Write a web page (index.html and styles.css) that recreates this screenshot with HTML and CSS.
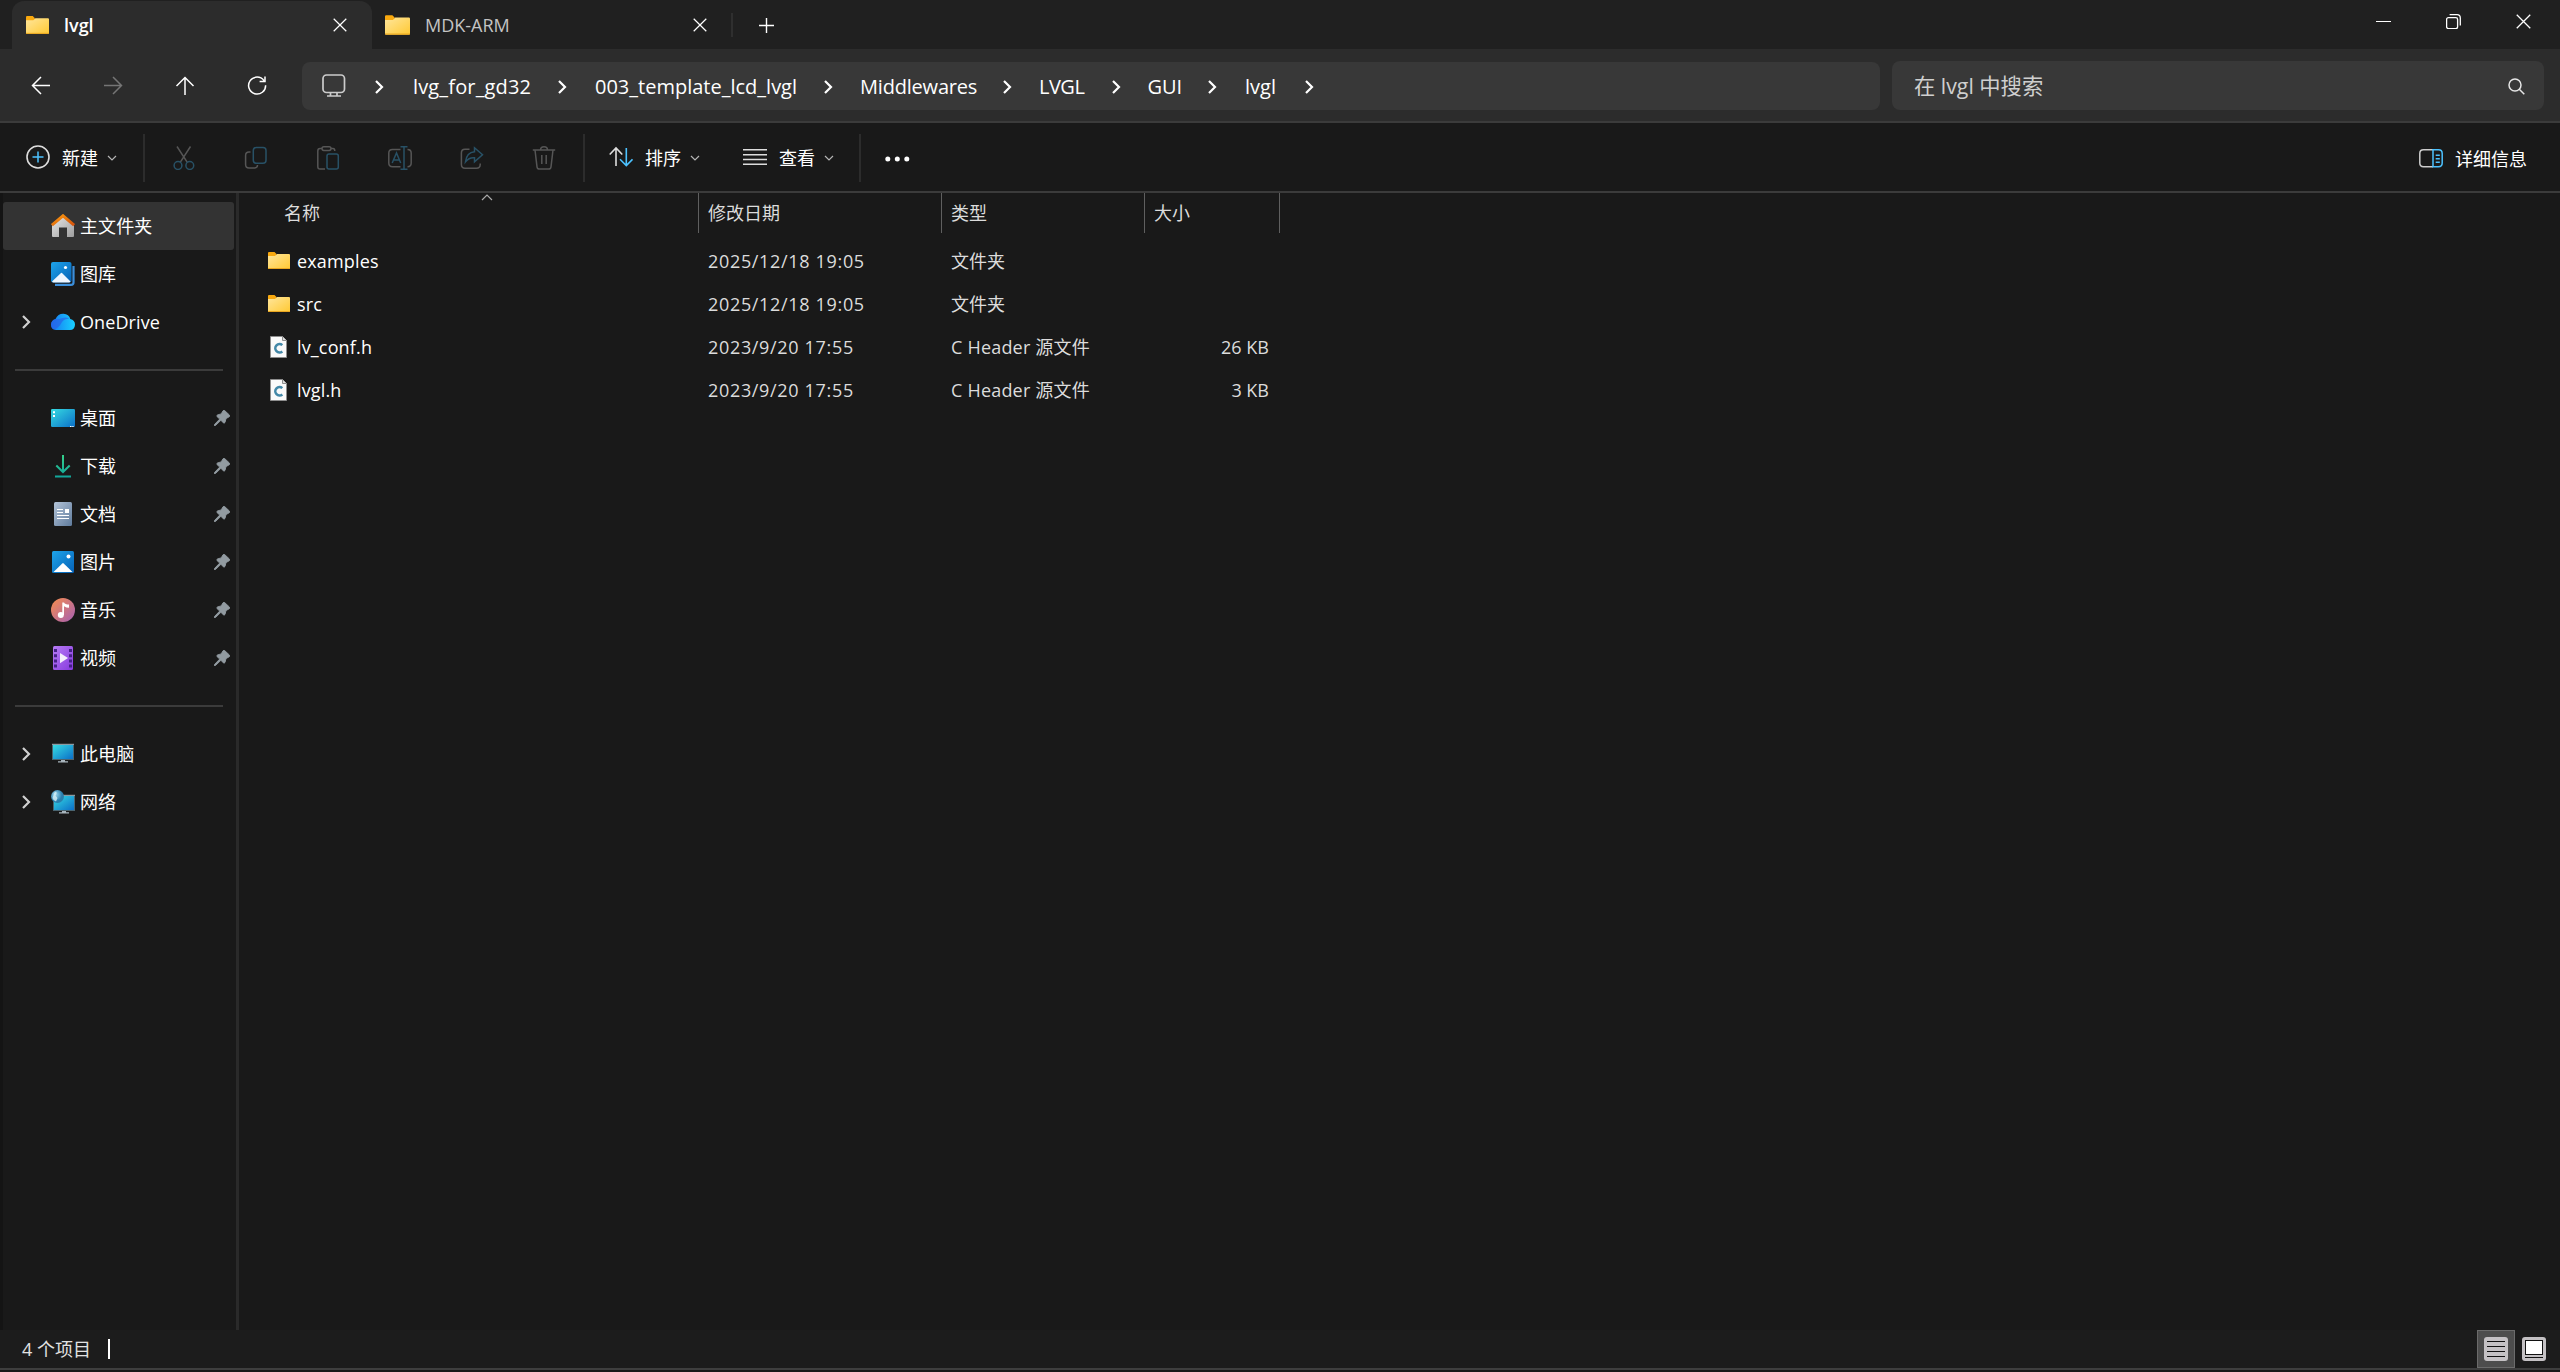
FILE: index.html
```
<!DOCTYPE html>
<html lang="zh-CN">
<head>
	<meta charset="utf-8">
	<title>lvgl</title>
	<link rel="stylesheet" href="styles.css">
</head>
<body>
	<svg class="defs">
		<defs>
			<linearGradient id="gFolder" x1="0" y1="0" x2="1" y2="1"><stop offset="0" stop-color="#ffe69c"/><stop offset="1" stop-color="#ffc933"/></linearGradient>
			<linearGradient id="gScreen" x1="0" y1="0" x2="1" y2="1"><stop offset="0" stop-color="#36dbe2"/><stop offset="1" stop-color="#0b6fc8"/></linearGradient>
			<linearGradient id="gBlue" x1="0" y1="0" x2="1" y2="1"><stop offset="0" stop-color="#1ea4ea"/><stop offset="1" stop-color="#0561b6"/></linearGradient>
			<linearGradient id="gRoof" x1="0" y1="0" x2="1" y2="1"><stop offset="0" stop-color="#fb9a10"/><stop offset="1" stop-color="#d4500a"/></linearGradient>
			<linearGradient id="gWall" x1="0" y1="0" x2="1" y2="1"><stop offset="0" stop-color="#e8e8e8"/><stop offset="1" stop-color="#9e9e9e"/></linearGradient>
			<linearGradient id="gCloud" x1="0" y1="0" x2="1" y2="0"><stop offset="0" stop-color="#1677f0"/><stop offset="1" stop-color="#19d0ff"/></linearGradient>
			<linearGradient id="gDown" x1="0" y1="0" x2="0" y2="1"><stop offset="0" stop-color="#35d08a"/><stop offset="1" stop-color="#12a79b"/></linearGradient>
			<linearGradient id="gDoc" x1="0" y1="0" x2="1" y2="1"><stop offset="0" stop-color="#b3c4d8"/><stop offset="1" stop-color="#5f7b9c"/></linearGradient>
			<linearGradient id="gMusic" x1="0" y1="0" x2="1" y2="1"><stop offset="0" stop-color="#f78d4c"/><stop offset="1" stop-color="#a55fb5"/></linearGradient>
			<linearGradient id="gVideo" x1="0" y1="0" x2="1" y2="1"><stop offset="0" stop-color="#b77cf6"/><stop offset="1" stop-color="#8639dd"/></linearGradient>
			<radialGradient id="gGlobe" cx=".35" cy=".35"><stop offset="0" stop-color="#9fd8f0"/><stop offset="1" stop-color="#2a7fae"/></radialGradient>
		</defs>
		<symbol id="folder" viewBox="0 0 22 17">
			<path d="M0 1Q0 0 1 0H6.5L8.5 2V6H0z" fill="#f9a90f"/>
			<path d="M0 4H7L9 2H21Q22 2 22 3V16Q22 17 21 17H1Q0 17 0 16z" fill="url(#gFolder)"/>
			<path d="M0 16.5H22" stroke="#e9a620"/>
		</symbol>
		<symbol id="cfile" viewBox="0 0 17 22">
			<path d="M.5 .5H12.5L16.5 4.5V21.5H.5z" fill="#fafafa" stroke="#8d8d8d"/>
			<path d="M12.5 .5V4.5H16.5" fill="#ddd" stroke="#8d8d8d"/>
			<path d="M12.3 9.1A4.2 4.2 0 1 0 12.3 15.4" fill="none" stroke="#4388a8" stroke-width="2.6"/>
		</symbol>
		<symbol id="pin" viewBox="0 0 16 16">
			<path d="M9 .8Q9.9 -.2 10.8 .7L15.4 5Q16.2 5.9 15.3 6.7L12 8.6L11 12.4Q10.3 13.6 9.3 12.7L6.9 10.3L1.4 15.6L.2 15.8L.4 14.6L5.7 9.1L3 6.5Q2.4 5.4 3.6 4.9L7.2 3.9z" fill="#929ba1" stroke="#929ba1" stroke-width=".9"/>
		</symbol>
		<symbol id="right" viewBox="0 0 10 16"><path d="M2 2L8 8L2 14" fill="none" stroke="currentColor" stroke-width="2.2"/></symbol>
		<symbol id="down" viewBox="0 0 10 6"><path d="M1 1L5 5L9 1" fill="none" stroke="#b5b5b5" stroke-width="1.2"/></symbol>
		<symbol id="close" viewBox="0 0 16 16"><path d="M.8 .8L15.2 15.2M15.2 .8L.8 15.2" stroke="#fff" stroke-width="1.4"/></symbol>
	</svg>

	<header class="tabs">
		<div class="tab active">
			<svg class="tab-folder"><use href="#folder"/></svg>
			<span>lvgl</span>
			<svg class="tab-close"><use href="#close"/></svg>
		</div>
		<div class="tab">
			<svg class="tab-folder big"><use href="#folder"/></svg>
			<span>MDK-ARM</span>
			<svg class="tab-close"><use href="#close"/></svg>
		</div>
		<div class="tab-sep"></div>
		<svg class="tab-new" viewBox="0 0 15 15"><path d="M7.5 0V15M0 7.5H15" stroke="#fff" stroke-width="1.4"/></svg>
		<div class="window-buttons">
			<svg viewBox="0 0 15 15"><path d="M0 7.5H15" stroke="#fff"/></svg>
			<svg viewBox="0 0 15 15" fill="none" stroke="#fff" stroke-width="1.3"><rect x=".6" y="3.6" width="11" height="11" rx="1.8"/><path d="M3.6 .7H11Q14.3 .7 14.3 4V11.4"/></svg>
			<svg><use href="#close"/></svg>
		</div>
	</header>

	<nav class="navbar">
		<div class="nav-buttons">
			<svg viewBox="0 0 20 20"><path d="M19 9.5H1.5M10 1L1.5 9.5L10 18"/></svg>
			<svg class="off" viewBox="0 0 20 20"><path d="M1 9.5H18.5M10 1L18.5 9.5L10 18"/></svg>
			<svg viewBox="0 0 20 20"><path d="M10 19V1.5M1.5 10L10 1.5L18.5 10"/></svg>
			<svg viewBox="0 0 20 20"><path d="M17 4.6A8.5 8.5 0 1 0 18.6 9.2M18 .5V5.5H12.6"/></svg>
		</div>
		<div class="address">
			<svg class="monitor" viewBox="0 0 24 24" fill="none" stroke="#ccc" stroke-width="1.7"><rect x="1" y="1" width="21.5" height="17.5" rx="3.5"/><path d="M8.5 18.5V22M15 18.5V22M5 22H19"/></svg>
			<svg class="chev"><use href="#right"/></svg>
			<span class="c1">lvg_for_gd32</span>
			<svg class="chev"><use href="#right"/></svg>
			<span class="c2">003_template_lcd_lvgl</span>
			<svg class="chev"><use href="#right"/></svg>
			<span class="c3">Middlewares</span>
			<svg class="chev"><use href="#right"/></svg>
			<span class="c4">LVGL</span>
			<svg class="chev"><use href="#right"/></svg>
			<span class="c5">GUI</span>
			<svg class="chev"><use href="#right"/></svg>
			<span class="c6">lvgl</span>
			<svg class="chev"><use href="#right"/></svg>
		</div>
		<div class="search">
			<span>在 lvgl 中搜索</span>
			<svg viewBox="0 0 17 17" fill="none" stroke="#e6e6e6" stroke-width="1.5"><circle cx="7" cy="7" r="6"/><path d="M11.3 11.3L16.3 16.3"/></svg>
		</div>
	</nav>

	<div class="toolbar">
		<div class="tool new">
			<svg class="ic" viewBox="0 0 24 24" fill="none"><circle cx="12" cy="12" r="11" stroke="#ddd" stroke-width="1.6"/><path d="M12 6.5V17.5M6.5 12H17.5" stroke="#4cc2ff" stroke-width="1.5"/></svg>
			<span>新建</span>
			<svg class="drop"><use href="#down"/></svg>
		</div>
		<div class="bar-sep"></div>
		<div class="icons">
			<svg viewBox="0 0 24 24"><path d="M5 .5L15.3 16.3M18.5 .5L8.2 16.3"/><g class="b"><circle cx="6" cy="19.5" r="3.9"/><circle cx="17.8" cy="19.5" r="3.9"/></g></svg>
			<svg viewBox="0 0 24 24"><path d="M6.5 6H5Q1.6 6 1.6 9.5V18.5Q1.6 22 5 22H10Q13.5 22 13.5 19"/><rect class="b" x="9.3" y="1.5" width="12.7" height="15.8" rx="3"/></svg>
			<svg viewBox="0 0 24 24"><path d="M9 23H4Q1.8 23 1.8 20.5V5Q1.8 2.6 4 2.6H6M15 2.6H17Q18.8 2.6 18.8 5"/><rect x="6" y=".8" width="9" height="3.6" rx="1.8"/><rect class="b" x="11" y="8" width="11.3" height="15" rx="2"/></svg>
			<svg viewBox="0 0 24 24"><path d="M12.5 3.5H4.5Q.8 3.5 .8 7V17Q.8 20.7 4.5 20.7H12.5M19.5 3.5Q23.2 3.5 23.2 7V17Q23.2 20.7 19.5 20.7"/><path class="b" d="M12.5 .8H19.5M16 .8V23.2M12.5 23.2H19.5M4.2 17L8.5 7L12.7 17M5.6 14H11.3"/></svg>
			<svg viewBox="0 0 24 24"><path d="M9.5 3.3H5Q1.4 3.3 1.4 7V18.5Q1.4 22.2 5 22.2H16.5Q20.2 22.2 20.2 18.5V17.5"/><path class="b" d="M14.5 1.8L22.5 8.7L14.5 15.8V11.7Q9 11.2 5.5 15.8Q6.7 6.4 14.5 5.8z"/></svg>
			<svg viewBox="0 0 24 24"><path d="M.8 4H23.2M3 4L5 20.8Q5.3 23 7.5 23H16.5Q18.7 23 19 20.8L21 4M8.5 4Q8.5 .8 12 .8Q15.5 .8 15.5 4M9.8 9V18M14.2 9V18"/></svg>
		</div>
		<div class="bar-sep"></div>
		<div class="tool sort">
			<svg class="ic" viewBox="0 0 24 24" fill="none" stroke-width="1.6"><path d="M7 21V3M.7 9.5L7 3L13.3 9.5" stroke="#ddd"/><path d="M17.3 3V20.5M11 14.3L17.3 20.5L23.5 14.3" stroke="#4cc2ff"/></svg>
			<span>排序</span>
			<svg class="drop"><use href="#down"/></svg>
		</div>
		<div class="tool view">
			<svg class="ic" viewBox="0 0 24 24"><path d="M0 4.8H24M0 9.8H24M0 14.5H24M0 19.3H24" stroke="#ddd" stroke-width="1.6"/></svg>
			<span>查看</span>
			<svg class="drop"><use href="#down"/></svg>
		</div>
		<div class="bar-sep"></div>
		<svg class="more" viewBox="0 0 25 6" fill="#fff"><circle cx="2.8" cy="3" r="2.5"/><circle cx="12.3" cy="3" r="2.5"/><circle cx="21.8" cy="3" r="2.5"/></svg>
		<div class="tool details">
			<svg class="ic" viewBox="0 0 24 24" fill="none" stroke-width="1.5"><path d="M14 3.8H4.5Q.8 3.8 .8 7.5V17Q.8 20.7 4.5 20.7H14" stroke="#ccc"/><path d="M14 3.8H19.5Q23.2 3.8 23.2 7.5V17Q23.2 20.7 19.5 20.7H14zM16.7 9.3H20.8M16.7 12.8H20.8M16.7 16.2H20.8" stroke="#4cc2ff"/></svg>
			<span>详细信息</span>
		</div>
	</div>

	<main>
		<aside>
			<div class="item selected">
				<svg viewBox="0 0 24 24"><path d="M1 11L12 2L23 11V22Q23 23 22 23H16V13.5H8V23H2Q1 23 1 22z" fill="url(#gWall)"/><path d="M.9 11.2L12 1.8L23.1 11.2" fill="none" stroke="url(#gRoof)" stroke-width="3"/></svg>
				<span>主文件夹</span>
			</div>
			<div class="item">
				<svg viewBox="0 0 24 24"><path d="M22.5 4V20.5Q22.5 22.8 20 22.8H4" fill="none" stroke="#3b8fdc" stroke-width="2.2"/><rect width="20.5" height="20.5" rx="2" fill="url(#gBlue)"/><path d="M1 19.5L10 11Q10.5 10.6 11 11L19.5 19.5Q19 20.5 18 20.5H2.5Q1.5 20.5 1 19.5z" fill="#eef6ff"/><circle cx="14.5" cy="5.5" r="1.6" fill="#fff"/></svg>
				<span>图库</span>
			</div>
			<div class="item">
				<svg class="exp"><use href="#right"/></svg>
				<svg viewBox="0 0 24 24"><path d="M5 20Q0 19.5 0 14.5Q.3 10 4.5 9Q7 3.5 12.5 3.7Q18 4 19.3 9Q24 10 24 14.7Q23.6 20 19 20z" fill="url(#gCloud)"/><path d="M4.7 9Q.3 10 0 14.5Q0 18 3 19.5Q8 18 11 12Q13.5 8.5 18.5 8.7Q15 6.7 11.5 8Q8 9.6 4.7 9z" fill="#2a5fe8" opacity=".65"/></svg>
				<span>OneDrive</span>
			</div>
			<div class="line"></div>
			<div class="item">
				<svg viewBox="0 0 24 24"><rect y="3" width="24" height="18" rx="1.2" fill="url(#gScreen)"/><path d="M2 5.2H4V7.2H2zM2 9H4V11H2zM19 20H20.5V21H19zM21.3 20H22.6V21H21.3z" fill="#fff"/></svg>
				<span>桌面</span>
				<svg class="pin"><use href="#pin"/></svg>
			</div>
			<div class="item">
				<svg viewBox="0 0 24 24" fill="none" stroke="url(#gDown)" stroke-width="2"><path d="M12 1V18M5.3 11.5L12 18L18.7 11.5M4 22.5L20 22.4"/></svg>
				<span>下载</span>
				<svg class="pin"><use href="#pin"/></svg>
			</div>
			<div class="item">
				<svg viewBox="0 0 24 24"><rect x="3" width="18" height="24" rx="1.5" fill="url(#gDoc)"/><path d="M6 7.5H12M6 10.5H12M6 13.5H18M6 16.5H18" stroke="#fff"/><rect x="14" y="7" width="4" height="4" fill="#fff"/></svg>
				<span>文档</span>
				<svg class="pin"><use href="#pin"/></svg>
			</div>
			<div class="item">
				<svg viewBox="0 0 24 24"><rect x="1" y="1" width="22" height="22" rx="1.5" fill="url(#gBlue)"/><path d="M2.5 22L11.3 13.4Q12 12.8 12.7 13.4L21.5 22z" fill="#fff"/><circle cx="17.5" cy="6.5" r="2" fill="#fff"/></svg>
				<span>图片</span>
				<svg class="pin"><use href="#pin"/></svg>
			</div>
			<div class="item">
				<svg viewBox="0 0 24 24"><circle cx="12" cy="12" r="12" fill="url(#gMusic)"/><circle cx="9.8" cy="17" r="3" fill="#fff"/><path d="M11.3 17V4.5H13Q14 6.5 18 6.6V9.8Q15.5 9.8 13 8.3V17z" fill="#fff"/></svg>
				<span>音乐</span>
				<svg class="pin"><use href="#pin"/></svg>
			</div>
			<div class="item">
				<svg viewBox="0 0 24 24"><rect x="2" width="20" height="24" rx="1.5" fill="url(#gVideo)"/><path d="M4.5 3V22M19.5 3V22" stroke="#452186" stroke-width="3" stroke-dasharray="3 2.2"/><path d="M9 7L17 12L9 17.3z" fill="#f4eefc"/></svg>
				<span>视频</span>
				<svg class="pin"><use href="#pin"/></svg>
			</div>
			<div class="line"></div>
			<div class="item">
				<svg class="exp"><use href="#right"/></svg>
				<svg viewBox="0 0 24 24"><rect x="1" y="2" width="22" height="16" fill="#4a6470"/><path d="M1 2.3H23" stroke="#9aa8af"/><rect x="2" y="3" width="20" height="14" fill="url(#gScreen)"/><path d="M10 18H14V19.2H17V20.4H7V19.2H10z" fill="#a9b6be"/></svg>
				<span>此电脑</span>
			</div>
			<div class="item">
				<svg class="exp"><use href="#right"/></svg>
				<svg viewBox="0 0 24 24"><rect x="2" y="5" width="22" height="16" fill="#4a6470"/><path d="M2 5.3H24" stroke="#9aa8af"/><rect x="3" y="6" width="20" height="14" fill="url(#gScreen)"/><path d="M11 21H15V22.2H18V23.4H8V22.2H11z" fill="#a9b6be"/><circle cx="6.5" cy="6.5" r="6.5" fill="url(#gGlobe)"/><path d="M1.5 8Q3 5 2.8 3L5 1.5Q6.5 3 4.5 5.5L6.5 8L5 11.5Q2 10.5 1.5 8z" fill="#d8f0f8" opacity=".8"/></svg>
				<span>网络</span>
			</div>
		</aside>

		<section class="files">
			<div class="row head">
				<div class="name">名称<svg class="sorted" viewBox="0 0 12 7"><path d="M1 6L6 1L11 6" fill="none" stroke="#aaa" stroke-width="1.2"/></svg></div>
				<div>修改日期</div>
				<div>类型</div>
				<div>大小</div>
			</div>
			<div class="row">
				<div class="name"><svg class="folder"><use href="#folder"/></svg>examples</div>
				<div class="date">2025/12/18 19:05</div>
				<div>文件夹</div>
				<div class="size"></div>
			</div>
			<div class="row">
				<div class="name"><svg class="folder"><use href="#folder"/></svg>src</div>
				<div class="date">2025/12/18 19:05</div>
				<div>文件夹</div>
				<div class="size"></div>
			</div>
			<div class="row">
				<div class="name"><svg class="cfile"><use href="#cfile"/></svg>lv_conf.h</div>
				<div class="date">2023/9/20 17:55</div>
				<div class="type">C Header 源文件</div>
				<div class="size">26 KB</div>
			</div>
			<div class="row">
				<div class="name"><svg class="cfile"><use href="#cfile"/></svg>lvgl.h</div>
				<div class="date">2023/9/20 17:55</div>
				<div class="type">C Header 源文件</div>
				<div class="size">3 KB</div>
			</div>
		</section>
	</main>

	<footer>
		<span>4 个项目</span>
		<div class="caret"></div>
		<div class="mode on">
			<svg viewBox="0 0 24 24"><rect width="24" height="24" rx="3" fill="#c4c1c4"/><path d="M3 4.5H21M3 9.5H21M3 14.5H21M3 19.5H21" stroke="#111"/></svg>
		</div>
		<div class="mode">
			<svg viewBox="0 0 24 24"><rect width="24" height="24" rx="3" fill="#c4c1c4"/><rect x="3.5" y="3.5" width="17" height="14" fill="#fff" stroke="#111"/><path d="M3 20.5H21" stroke="#111"/></svg>
		</div>
	</footer>
</body>
</html>
```
FILE: styles.css
```
*{
	box-sizing: border-box;
}
body{
	margin: 0;
	height: 1372px;
	display: flex;
	flex-direction: column;
	overflow: hidden;
	background-color: #191919;
	color: white;
	font-family: "Open Sans","Noto Sans CJK SC",sans-serif;
	font-size: 18px;
	line-height: 24px;
	white-space: nowrap;
}
svg{
	display: block;
	flex: none;
}
.defs{
	position: absolute;
	width: 0;
	height: 0;
}

/* tabs */
.tabs{
	display: flex;
	height: 49px;
	padding-left: 12px;
	background-color: #202020;
}
.tab{
	display: flex;
	align-items: center;
	width: 360px;
	height: 48px;
	margin-top: 1px;
	padding: 0 25px 0 13px;
	color: #c4c4c4;
}
.tab.active{
	padding-left: 14px;
	background-color: #2c2c2c;
	border-radius: 12px 12px 0 0;
	color: white;
	font-weight: 600;
}
.tab span{
	flex: 1;
}
.tab-folder{
	width: 23px;
	height: 18px;
	margin-right: 15px;
}
.tab-folder.big{
	width: 25px;
	height: 20px;
}
.tab-close{
	width: 14px;
	height: 14px;
}
.tab-sep{
	width: 2px;
	height: 24px;
	margin: 13px 0 0 -1px;
	background-color: #2f2f2f;
}
.tab-new{
	width: 15px;
	height: 15px;
	margin: 18px 0 0 26px;
}
.window-buttons{
	display: flex;
	gap: 55px;
	margin: 14px 29px 0 auto;
}
.window-buttons svg{
	width: 15px;
	height: 15px;
}

/* address row */
.navbar{
	display: flex;
	height: 74px;
	padding: 12px 16px 0 0;
	background-color: #2c2c2c;
	border-bottom: 2px solid #3b3b3b;
}
.nav-buttons{
	display: flex;
	gap: 52px;
	width: 302px;
	padding: 15px 0 0 31px;
}
.nav-buttons svg{
	width: 20px;
	height: 20px;
	fill: none;
	stroke: white;
	stroke-width: 1.5;
}
.nav-buttons svg.off{
	stroke: #757575;
}
.address,
.search{
	display: flex;
	align-items: center;
	height: 49px;
	background-color: #383838;
	border-radius: 8px;
	font-size: 20px;
}
.address{
	width: 1578px;
	height: 48px;
	margin: 1px 12px 0 0;
	padding-left: 20px;
}
.monitor{
	width: 24px;
	height: 24px;
	margin-right: 28px;
}
.chev{
	width: 10px;
	height: 16px;
	margin-top: 1px;
}
.address span{
	padding: 2px 0 0 28px;
}
.address .c1{
	width: 173px;
	padding-left: 29px;
	letter-spacing: .15px;
}
.c2{
	width: 256px;
}
.address .c3{
	width: 169px;
	padding-left: 27px;
	letter-spacing: -.2px;
}
.address .c4{
	width: 98.5px;
	padding-left: 27px;
	letter-spacing: -.5px;
}
.address .c5{
	width: 86.5px;
	padding-left: 27px;
}
.c6{
	width: 87px;
}
.search{
	flex: 1;
	justify-content: space-between;
	padding: 1px 19px 0 22px;
	color: #cfcfcf;
}
.search span{
	font-size: 21.3px;
}
.search svg{
	width: 17px;
	height: 17px;
}

/* toolbar */
.toolbar{
	display: flex;
	align-items: center;
	height: 70px;
	border-bottom: 2px solid #3b3b3b;
}
.tool{
	display: flex;
	align-items: center;
}
.tool span{
	padding-top: 2px;
}
.ic{
	width: 24px;
	height: 24px;
	margin-right: 12px;
}
.drop{
	width: 10px;
	height: 6px;
	margin: 2px 0 0 9px;
}
.new{
	width: 143px;
	padding-left: 26px;
}
.bar-sep{
	width: 2px;
	height: 48px;
	margin-top: 2px;
	background-color: #2c2c2c;
}
.icons{
	display: flex;
	gap: 48px;
	width: 438px;
	padding: 1px 0 0 27px;
}
.icons svg{
	width: 24px;
	height: 24px;
	fill: none;
	stroke: #565656;
	stroke-width: 1.5;
}
.icons .b{
	stroke: #285166;
}
.sort{
	width: 158px;
	padding-left: 24px;
}
.view{
	width: 116px;
}
.more{
	width: 25px;
	height: 6px;
	margin: 4px 0 0 24px;
}
.details{
	margin: 1px 33px 0 auto;
}

/* sidebar + list */
main{
	display: flex;
	flex: 1;
}
aside{
	width: 239px;
	padding: 9px 2px 0 0;
	border-left: 3px solid #141414;
	border-right: 3px solid #2a2a2a;
}
.item{
	position: relative;
	display: flex;
	align-items: center;
	height: 48px;
	padding-left: 48px;
}
.item.selected{
	background-color: #333;
	border-radius: 3px;
}
.item svg{
	width: 24px;
	height: 24px;
	margin-right: 5px;
}
.item span{
	letter-spacing: .1px;
}
.item svg.exp{
	width: 10px;
	height: 16px;
	margin: 0 20px 0 -30px;
	color: #d0d0d0;
}
.item svg.pin{
	width: 16px;
	height: 16px;
	margin: 0 4px 0 auto;
}
.line{
	height: 2px;
	margin: 23px 11px 23px 12px;
	background-color: #3b3b3b;
}
.files{
	flex: 1;
}
.row{
	display: grid;
	grid-template-columns: 460px 243px 203px 135px;
	align-items: center;
	height: 43px;
	color: #dcdcdc;
}
.row > div{
	padding-left: 9px;
}
.row .name{
	position: relative;
	display: flex;
	align-items: center;
	padding-left: 29px;
	color: white;
	letter-spacing: .15px;
}
.row.head{
	height: 40px;
	margin-bottom: 6px;
}
.row.head > div{
	height: 40px;
	line-height: 40px;
	border-right: 1px solid #5f5f5f;
	color: #dcdcdc;
}
.row.head .name{
	padding-left: 45px;
	letter-spacing: 0;
}
.sorted{
	position: absolute;
	left: 242px;
	top: 1px;
	width: 12px;
	height: 7px;
}
.folder{
	width: 22px;
	height: 17px;
	margin-right: 7px;
}
.cfile{
	width: 17px;
	height: 22px;
	margin: 0 10px 0 2px;
}
.date{
	letter-spacing: .67px;
}
.type{
	letter-spacing: .2px;
}
.row .size{
	padding-right: 11px;
	text-align: right;
}

/* status bar */
footer{
	display: flex;
	align-items: center;
	height: 42px;
	padding: 0 8px 2px 22px;
	background-color: #1c1c1c;
	border-bottom: 2px solid #191919;
	box-shadow: inset 0 -2px #3e3e3e;
	color: #e2e2e2;
}
.caret{
	width: 2px;
	height: 20px;
	margin: 0 auto 0 17px;
	background-color: white;
}
.mode{
	display: flex;
	align-items: center;
	justify-content: center;
	width: 37px;
	height: 38px;
}
.mode.on{
	width: 38px;
	background-color: #4d4d4d;
	border: 1px solid #6b6b6b;
}
.mode svg{
	width: 24px;
	height: 24px;
}
```
